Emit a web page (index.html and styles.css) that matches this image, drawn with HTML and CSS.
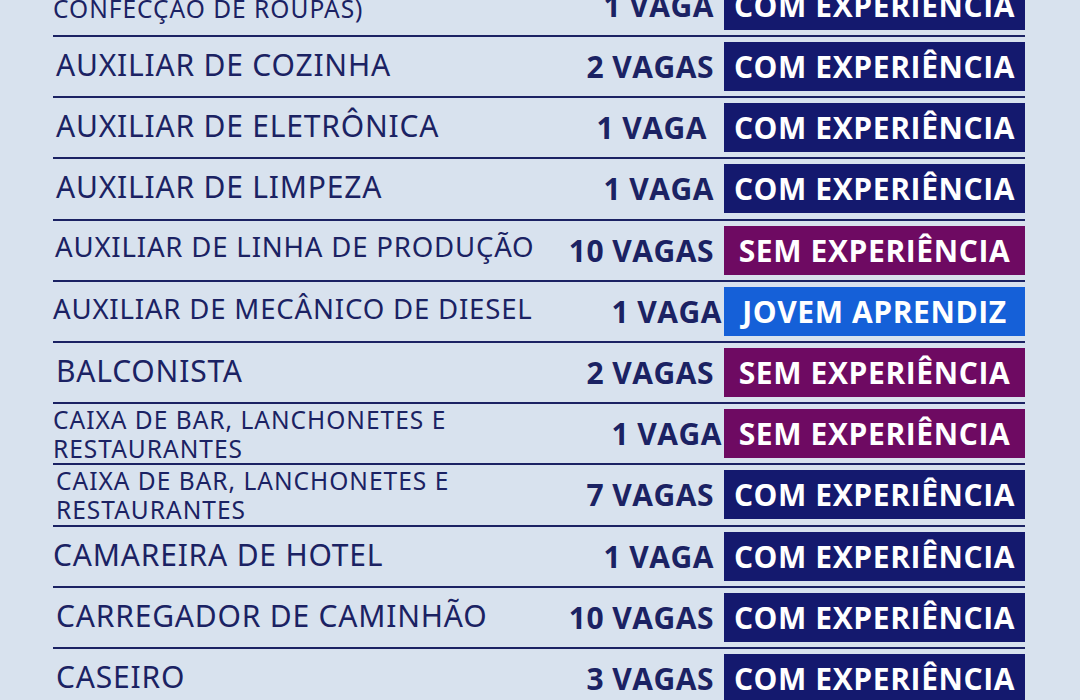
FILE: index.html
```html
<!DOCTYPE html>
<html lang="pt-BR">
<head>
<meta charset="utf-8">
<title>Vagas</title>
<link rel="stylesheet" href="styles.css">
</head>
<body>
<main class="board">
  <div class="row">
    <div class="title title--small title--top">CONFECÇÃO DE ROUPAS)</div>
    <div class="count">1 VAGA</div>
    <div class="badge badge--com">COM EXPERIÊNCIA</div>
  </div>
  <div class="row">
    <div class="title">AUXILIAR DE COZINHA</div>
    <div class="count">2 VAGAS</div>
    <div class="badge badge--com">COM EXPERIÊNCIA</div>
  </div>
  <div class="row">
    <div class="title">AUXILIAR DE ELETRÔNICA</div>
    <div class="count count--in">1 VAGA</div>
    <div class="badge badge--com">COM EXPERIÊNCIA</div>
  </div>
  <div class="row">
    <div class="title">AUXILIAR DE LIMPEZA</div>
    <div class="count">1 VAGA</div>
    <div class="badge badge--com">COM EXPERIÊNCIA</div>
  </div>
  <div class="row">
    <div class="title title--md">AUXILIAR DE LINHA DE PRODUÇÃO</div>
    <div class="count">10 VAGAS</div>
    <div class="badge badge--sem">SEM EXPERIÊNCIA</div>
  </div>
  <div class="row">
    <div class="title title--md title--flush">AUXILIAR DE MECÂNICO DE DIESEL</div>
    <div class="count count--out">1 VAGA</div>
    <div class="badge badge--jovem">JOVEM APRENDIZ</div>
  </div>
  <div class="row">
    <div class="title">BALCONISTA</div>
    <div class="count">2 VAGAS</div>
    <div class="badge badge--sem">SEM EXPERIÊNCIA</div>
  </div>
  <div class="row">
    <div class="title title--small title--flush">CAIXA DE BAR, LANCHONETES E<br>RESTAURANTES</div>
    <div class="count count--out">1 VAGA</div>
    <div class="badge badge--sem">SEM EXPERIÊNCIA</div>
  </div>
  <div class="row">
    <div class="title title--small">CAIXA DE BAR, LANCHONETES E<br>RESTAURANTES</div>
    <div class="count">7 VAGAS</div>
    <div class="badge badge--com">COM EXPERIÊNCIA</div>
  </div>
  <div class="row">
    <div class="title title--flush">CAMAREIRA DE HOTEL</div>
    <div class="count">1 VAGA</div>
    <div class="badge badge--com">COM EXPERIÊNCIA</div>
  </div>
  <div class="row">
    <div class="title">CARREGADOR DE CAMINHÃO</div>
    <div class="count">10 VAGAS</div>
    <div class="badge badge--com">COM EXPERIÊNCIA</div>
  </div>
  <div class="row">
    <div class="title">CASEIRO</div>
    <div class="count">3 VAGAS</div>
    <div class="badge badge--com">COM EXPERIÊNCIA</div>
  </div>
</main>
</body>
</html>
```
FILE: styles.css
```css
html, body {
  margin: 0;
  padding: 0;
}
body {
  background: #d8e2ee;
  overflow: hidden;
  height: 700px;
}
.board {
  margin: -24.2px 0 0 53px;
  width: 972px;
}
.row {
  display: grid;
  grid-template-columns: minmax(0, 1fr) auto 301px;
  grid-template-rows: 59.2px;
  align-items: center;
  box-sizing: border-box;
  height: 61.2px;
  border-bottom: 2px solid #1b2263;
}
.title {
  margin-top: -3px;
  padding-left: 3px;
  font-family: "Noto Sans", "Open Sans", sans-serif;
  font-size: 30px;
  font-weight: 400;
  color: #1b2263;
  letter-spacing: 0.8px;
  white-space: nowrap;
  line-height: 1;
}
.title--flush { padding-left: 0; }
.title--md {
  margin-top: -6px;
  padding-left: 2px;
  font-size: 27.6px;
}
.title--md.title--flush { padding-left: 0; }
.title--small {
  margin-top: 0;
  font-size: 24.5px;
  line-height: 29px;
  letter-spacing: 1px;
}
.title--top {
  align-self: end;
  padding-bottom: 12px;
  padding-left: 0;
}
.count {
  padding-right: 10px;
  font-family: "Open Sans", "Noto Sans", sans-serif;
  font-size: 30px;
  font-weight: 700;
  letter-spacing: 0.5px;
  color: #1b2263;
  text-align: right;
  white-space: nowrap;
}
.count--in { padding-right: 17px; }
.count--out { padding-right: 2px; }
.badge {
  height: 49px;
  line-height: 49px;
  text-align: center;
  font-family: "Open Sans", "Noto Sans", sans-serif;
  font-size: 30px;
  font-weight: 700;
  letter-spacing: 0.6px;
  color: #ffffff;
  white-space: nowrap;
}
.badge--com { background: #14196e; }
.badge--sem { background: #6e0a62; }
.badge--jovem { background: #1560d8; }
```
